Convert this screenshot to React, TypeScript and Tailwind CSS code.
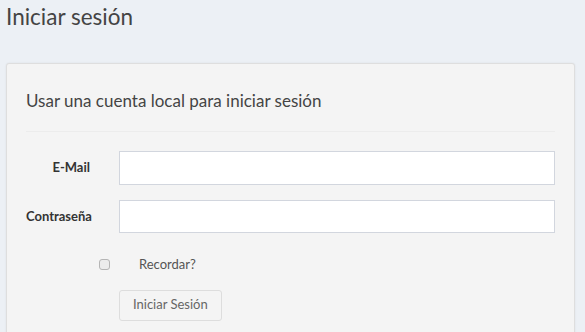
export default function App() {
  return (
    <div
      className="h-[332px] w-full overflow-hidden bg-[#ecf0f5] text-[#333]"
      style={{ fontFamily: "Lato, 'Open Sans', sans-serif" }}
    >
      {/* header */}
      <h1 className="px-[6px] pt-[4px] text-[22.5px] leading-[26px] text-[#444]">Iniciar sesión</h1>

      {/* card */}
      <div className="mt-[33px] ml-[6px] mr-[10px] rounded-[3px] border border-[#dedede] bg-[#f4f4f4] px-[19px] pb-6 shadow-[0_0_2px_rgba(0,0,0,0.08)]">
        <h4 className="pt-[26px] pb-[19px] text-[17px] leading-[22px] text-[#444]">
          Usar una cuenta local para iniciar sesión
        </h4>
        <hr className="border-t border-[#ececec]" />

        <form className="mt-[19px] flex flex-col gap-[15px]">
          <div className="flex items-center">
            <label className="w-[64px] whitespace-nowrap text-right text-[13px] font-bold text-[#333]">E-Mail</label>
            <input
              type="email"
              className="ml-[29px] h-[34px] flex-1 border border-[#d2d6de] bg-white px-3 outline-none"
            />
          </div>
          <div className="flex items-center">
            <label className="w-[64px] whitespace-nowrap text-right text-[13px] font-bold text-[#333]">Contraseña</label>
            <input
              type="password"
              className="ml-[29px] h-[33px] flex-1 border border-[#d2d6de] bg-white px-3 outline-none"
            />
          </div>

          <div className="mt-[7px] flex items-center">
            <span className="ml-[73px] h-[11px] w-[11px] rounded-[3px] border border-[#b5b5b5] bg-[#ececec]" />
            <span className="ml-[29px] text-[13px] text-[#555]">Recordar?</span>
          </div>

          <div className="ml-[93px]">
            <button
              type="button"
              className="h-[31px] rounded-[3px] border border-[#ddd] bg-[#f4f4f4] px-[13px] text-[13px] text-[#666]"
            >
              Iniciar Sesión
            </button>
          </div>
        </form>
      </div>
    </div>
  );
}
